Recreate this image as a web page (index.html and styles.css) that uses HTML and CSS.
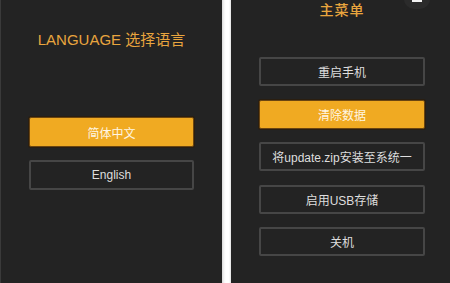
FILE: index.html
```html
<!DOCTYPE html>
<html lang="zh-CN">
<head>
<meta charset="utf-8">
<link rel="stylesheet" href="styles.css">
</head>
<body>
<div class="shots">
  <section class="screen screen-left">
    <h1 class="title title-lang">LANGUAGE 选择语言</h1>
    <div class="btn-list btn-list-left">
      <div class="btn btn-primary">简体中文</div>
      <div class="btn">English</div>
    </div>
  </section>
  <div class="divider"></div>
  <section class="screen screen-right">
    <span class="badge"></span>
    <h1 class="title title-menu">主菜单</h1>
    <div class="btn-list btn-list-right">
      <div class="btn">重启手机</div>
      <div class="btn btn-primary">清除数据</div>
      <div class="btn">将update.zip安装至系统一</div>
      <div class="btn">启用USB存储</div>
      <div class="btn">关机</div>
    </div>
  </section>
</div>
</body>
</html>
```

FILE: styles.css
```css
* { box-sizing: border-box; margin: 0; padding: 0; }
html, body { width: 450px; height: 283px; overflow: hidden; background: #ffffff; }
body {
  font-family: "Liberation Sans", "Noto Sans CJK SC", sans-serif;
}
.shots {
  display: flex;
  height: 283px;
}
.screen {
  background: #232323;
  height: 283px;
  display: flex;
  flex-direction: column;
  position: relative;
}
.screen-left {
  width: 222px;
  border-left: 1px solid #3a3a3a;
  align-items: center;
}
.divider {
  width: 9px;
  background: linear-gradient(to right, #d8d8d8 0, #f4f4f4 2px, #ffffff 4px, #ffffff 7px, #e2e2e2 9px);
}
.screen-right {
  width: 219px;
  padding-left: 28px;
}
.title {
  font-weight: normal;
  color: #e9a53e;
  text-align: center;
}
.title-lang {
  font-size: 15px;
  line-height: 18px;
  margin-top: 31px;
}
.title-menu {
  width: 166px;
  font-size: 14px;
  line-height: 16px;
  margin-top: 2px;
  letter-spacing: 1px;
  font-weight: 500;
}
.btn-list {
  display: flex;
  flex-direction: column;
}
.btn-list-left {
  width: 165px;
  margin-top: 68px;
  gap: 13px;
}
.btn-list-right {
  width: 166px;
  margin-top: 39px;
  gap: 13.5px;
}
.btn {
  height: 30px;
  border: 2px solid #464646;
  border-radius: 2px;
  color: #dedede;
  font-size: 12px;
  display: flex;
  align-items: center;
  justify-content: center;
  background: #232323;
}
.btn-list-right .btn {
  height: 29px;
}
.btn-primary {
  background: #f0aa22;
  border: 1px solid #6a4511;
  box-shadow: 0 0 0 1px #2a1e10;
  color: #fff6e4;
}
.badge {
  position: absolute;
  top: -11px;
  right: 20px;
  width: 26px;
  height: 20px;
  border-radius: 10px;
  background: #2b2b2b;
}
.badge::after {
  content: "";
  position: absolute;
  left: 8px;
  top: 10px;
  width: 10px;
  height: 3px;
  background: #f2f2f2;
}
```
